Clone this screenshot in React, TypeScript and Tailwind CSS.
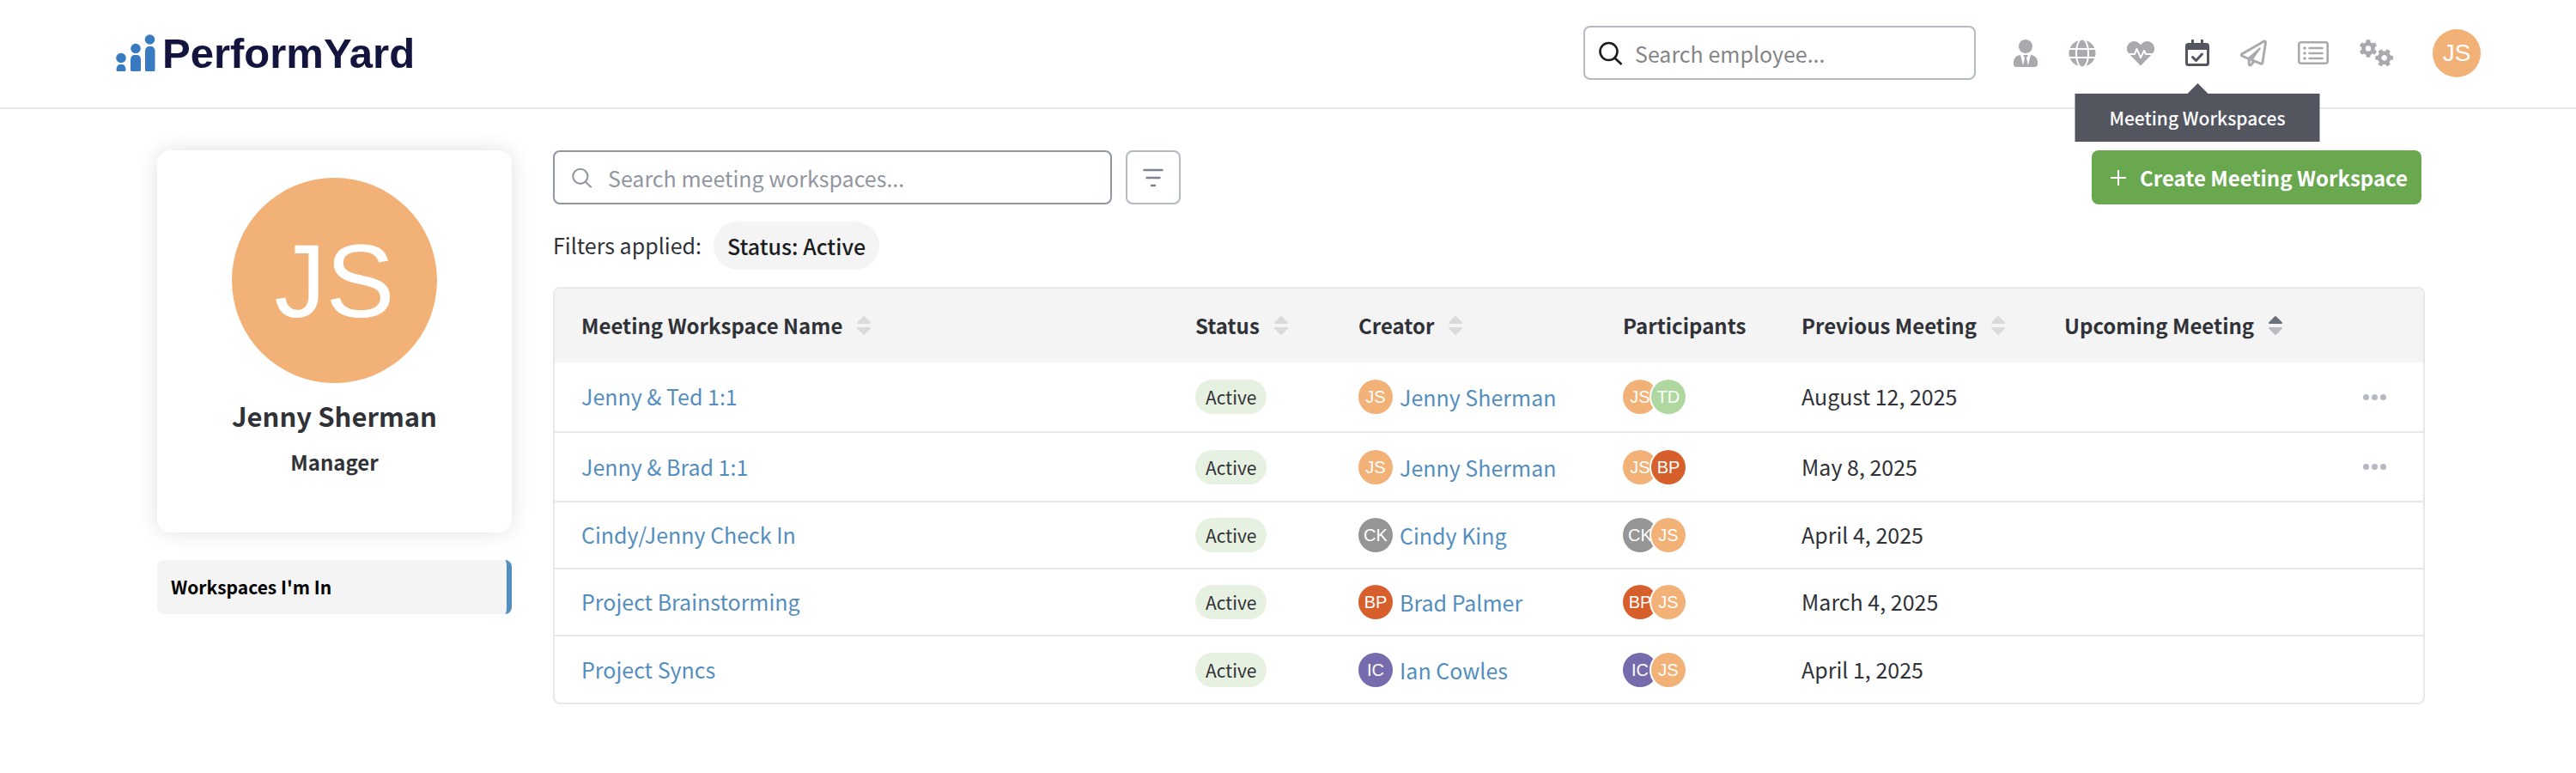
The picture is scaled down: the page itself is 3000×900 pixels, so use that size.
import clsx from "clsx";
import { FaGlobe, FaHeartbeat, FaRegPaperPlane, FaUserTie } from "react-icons/fa";

type Person = {
    name: string;
    initials: string;
    color: string;
};

type Workspace = {
    name: string;
    creator: Person;
    participants: Person[];
    previous: string;
    hasMenu: boolean;
};

const jenny: Person = { name: "Jenny Sherman", initials: "JS", color: "bg-[#f2b177]" };
const ted: Person = { name: "Ted", initials: "TD", color: "bg-[#aed8a0]" };
const brad: Person = { name: "Brad Palmer", initials: "BP", color: "bg-[#d65f2b]" };
const cindy: Person = { name: "Cindy King", initials: "CK", color: "bg-[#969696]" };
const ian: Person = { name: "Ian Cowles", initials: "IC", color: "bg-[#766bac]" };

const workspaces: Workspace[] = [
    { name: "Jenny & Ted 1:1", creator: jenny, participants: [jenny, ted], previous: "August 12, 2025", hasMenu: true },
    { name: "Jenny & Brad 1:1", creator: jenny, participants: [jenny, brad], previous: "May 8, 2025", hasMenu: true },
    { name: "Cindy/Jenny Check In", creator: cindy, participants: [cindy, jenny], previous: "April 4, 2025", hasMenu: false },
    { name: "Project Brainstorming", creator: brad, participants: [brad, jenny], previous: "March 4, 2025", hasMenu: false },
    { name: "Project Syncs", creator: ian, participants: [ian, jenny], previous: "April 1, 2025", hasMenu: false },
];

const SearchIcon = ({ className, strokeWidth }: { className: string; strokeWidth: number }) => (
    <svg viewBox="0 0 28 28" fill="none" stroke="currentColor" strokeWidth={strokeWidth} className={className}>
        <circle cx="11.5" cy="12" r="10" />
        <path d="M18.5 19.5L26.5 27" />
    </svg>
);

const CalendarIcon = () => (
    <svg viewBox="0 0 28 31" fill="currentColor" className="w-7 h-[31px]">
        <path
            fillRule="evenodd"
            d="M7 1a1 1 0 0 1 3 0v3h8V1a1 1 0 0 1 3 0v3h3.5a3.5 3.5 0 0 1 3.5 3.5v20a3.5 3.5 0 0 1-3.5 3.5h-21a3.5 3.5 0 0 1-3.5-3.5v-20a3.5 3.5 0 0 1 3.5-3.5H7zM3 12v15a1 1 0 0 0 1 1h20a1 1 0 0 0 1-1V12z"
        />
        <path d="M8.5 20.5l4 4 7-7.5" fill="none" stroke="currentColor" strokeWidth="3" strokeLinecap="round" strokeLinejoin="round" />
    </svg>
);

const ListIcon = () => (
    <svg viewBox="0 0 36 27" fill="none" stroke="currentColor" strokeWidth="2.6" className="w-9 h-[27px]">
        <rect x="1.3" y="1.3" width="33.4" height="24.4" rx="2.5" />
        <path d="M13.500 8h15M13.500 14h15M13.500 20h15" strokeWidth="2.6" strokeLinecap="round" />
        <path d="M8 8h.01M8 14h.01M8 20h.01" strokeWidth="3.6" strokeLinecap="round" />
    </svg>
);

const toothAngles = [0, 60, 120, 180, 240, 300];

const Gear = ({ x, y, rotation }: { x: number; y: number; rotation: number }) => (
    <g transform={`translate(${x} ${y}) rotate(${rotation})`}>
        <circle r="5.5" strokeWidth="4.6" />
        {toothAngles.map((angle) => (
            <path key={angle} d="M-1.4 -6.500V-9.200H1.4V-6.500z" transform={`rotate(${angle})`} strokeWidth="2.2" fill="currentColor" />
        ))}
    </g>
);

const GearsIcon = () => (
    <svg viewBox="0 0 39 31" fill="none" stroke="currentColor" strokeLinejoin="round" className="w-[39px] h-[31px]">
        <Gear x={10} y={10.5} rotation={0} />
        <Gear x={28.7} y={21.3} rotation={30} />
    </svg>
);

const navItems = [
    { label: "Profile", icon: <FaUserTie className="w-7 h-8" />, active: false },
    { label: "Company", icon: <FaGlobe className="size-8" />, active: false },
    { label: "Engagement", icon: <FaHeartbeat className="size-8" />, active: false },
    { label: "Meeting Workspaces", icon: <CalendarIcon />, active: true },
    { label: "Feedback", icon: <FaRegPaperPlane className="w-[31px] h-8" />, active: false },
    { label: "Reports", icon: <ListIcon />, active: false },
    { label: "Settings", icon: <GearsIcon />, active: false },
];

const Logo = () => (
    <a href="#home" className="flex items-center gap-2 text-[#14153f]">
        <svg viewBox="0 0 46 44" fill="#387bc1" className="w-[46px] h-11">
            <circle cx="6" cy="27.5" r="5.8" />
            <path d="M.5 41.5C.5 37 3 35 4.5 35h3c1.5 0 4 2 4 6.5 0 .9-.6 1.500-1.500 1.500H2C1.100 43 .5 42.400 .5 41.500z" />
            <circle cx="23" cy="16.5" r="5.8" />
            <path d="M17 30c0-4.5 2.5-6 4.5-6h3c2 0 4.5 1.5 4.5 6v11.5c0 .9-.6 1.5-1.5 1.5h-9c-.9 0-1.5-.6-1.5-1.5z" />
            <circle cx="39.5" cy="6" r="5.8" />
            <path d="M34 19.5c0-3.5 2.5-5.5 4.5-5.5h2.5c2 0 4.5 2 4.5 5.5v22c0 .9-.6 1.5-1.5 1.5h-8.500c-.9 0-1.500-.6-1.500-1.500z" />
        </svg>
        <span className="font-['Liberation_Sans',sans-serif] text-[49px] leading-[52px] font-bold">PerformYard</span>
    </a>
);

const Avatar = ({ person, className }: { person: Person; className?: string }) => (
    <span
        className={clsx(
            "flex shrink-0 items-center justify-center rounded-full text-white font-['Liberation_Sans',sans-serif]",
            person.color,
            className,
        )}
    >
        {person.initials}
    </span>
);

const SortButton = ({ label, active = false }: { label: string; active?: boolean }) => (
    <button type="button" className="flex items-center gap-4 font-bold">
        {label}
        <svg viewBox="0 0 18 24" strokeLinejoin="round" strokeWidth="2" className="w-[18px] h-6">
            <path d="M9 2L16 9H2z" className={active ? "fill-[#6b717c] stroke-[#6b717c]" : "fill-[#d9dadc] stroke-[#d9dadc]"} />
            <path d="M9 22L16 15H2z" className={active ? "fill-[#b9bcc1] stroke-[#b9bcc1]" : "fill-[#d9dadc] stroke-[#d9dadc]"} />
        </svg>
    </button>
);

const Header = () => (
    <header className="flex items-center justify-between border-b-2 border-[#e8e8e8] h-[127px] pb-0.5 pl-[135px] pr-[111px]">
        <Logo />
        <div className="flex items-center">
            <label className="flex items-center gap-3.5 w-[457px] h-[63px] mr-11 px-4 rounded-lg border-2 border-[#b5b9c1]">
                <SearchIcon className="size-7 shrink-0 text-[#1b1c20]" strokeWidth={2.6} />
                <input
                    type="search"
                    aria-label="Search employee"
                    placeholder="Search employee..."
                    className="w-full text-[25px] leading-9 outline-none placeholder:text-[#858585]"
                />
            </label>
            <nav className="flex items-center gap-9 text-[#a9aaae]">
                {navItems.map((item) => (
                    <div key={item.label} className="relative flex">
                        <a href="#nav" aria-label={item.label} className={clsx(item.active && "text-[#53565f]")}>
                            {item.icon}
                        </a>
                        {item.active && (
                            <div role="tooltip" className="absolute top-[51px] left-1/2 z-10 -translate-x-1/2 flex flex-col items-center">
                                <svg viewBox="0 0 24 12" className="w-6 h-3 fill-[#53565f]">
                                    <path d="M12 0L24 12H0z" />
                                </svg>
                                <span className="bg-[#53565f] px-10 py-2 text-[21px] leading-10 font-medium text-white whitespace-nowrap">
                                    Meeting Workspaces
                                </span>
                            </div>
                        )}
                    </div>
                ))}
            </nav>
            <button type="button" aria-label="Account" className="ml-[46px]">
                <Avatar person={jenny} className="size-14 text-[28px]" />
            </button>
        </div>
    </header>
);

const Sidebar = () => (
    <aside className="w-[413px] shrink-0">
        <section className="flex flex-col items-center rounded-2xl pt-8 pb-[60px] shadow-[0_0_24px_rgba(0,0,0,0.12)]">
            <Avatar person={jenny} className="size-[239px] text-[120px]" />
            <h1 className="mt-2.5 text-[31px] leading-[56px] font-bold">Jenny Sherman</h1>
            <p className="mt-1 text-[24px] leading-[44px] font-bold">Manager</p>
        </section>
        <a href="#mine" className="mt-8 block rounded-lg border-r-6 border-[#548ebe] bg-[#f4f4f4] px-4 py-3 text-[21px] leading-[39px] font-bold text-black">
            Workspaces I'm In
        </a>
    </aside>
);

const WorkspaceTable = () => (
    <div className="mt-5 overflow-hidden rounded-lg border-2 border-[#e8e8e8]">
        <table className="w-full table-fixed text-left">
            <colgroup>
                <col />
                <col className="w-[190px]" />
                <col className="w-[308px]" />
                <col className="w-[208px]" />
                <col className="w-[306px]" />
                <col className="w-[329px]" />
                <col className="w-[120px]" />
            </colgroup>
            <thead className="bg-[#f4f4f4] text-[24px] leading-9">
                <tr className="h-[86px]">
                    <th className="pl-[31px]"><SortButton label="Meeting Workspace Name" /></th>
                    <th className="pl-[31px]"><SortButton label="Status" /></th>
                    <th className="pl-[31px]"><SortButton label="Creator" /></th>
                    <th className="pl-[31px] font-bold">Participants</th>
                    <th className="pl-[31px]"><SortButton label="Previous Meeting" /></th>
                    <th className="pl-[31px]"><SortButton label="Upcoming Meeting" active /></th>
                    <th aria-label="Actions" />
                </tr>
            </thead>
            <tbody className="divide-y-2 divide-[#e8e8e8] text-[25px] leading-9">
                {workspaces.map((workspace) => (
                    <tr key={workspace.name} className={workspace.hasMenu ? "h-[81px]" : "h-[78px]"}>
                        <td className="pl-[31px] pb-0.5">
                            <a href="#workspace" className="text-[#548ebe]">{workspace.name}</a>
                        </td>
                        <td className="pl-[31px]">
                            <span className="block w-fit rounded-full bg-[#e7f1e1] px-3 text-[21px] leading-10">Active</span>
                        </td>
                        <td className="pl-[31px]">
                            <a href="#creator" className="flex items-center gap-2 text-[#548ebe]">
                                <Avatar person={workspace.creator} className="size-10 text-[20px]" />
                                {workspace.creator.name}
                            </a>
                        </td>
                        <td className="pl-[31px]">
                            <div className="flex items-center">
                                {workspace.participants.map((person, i) => (
                                    <Avatar
                                        key={person.initials}
                                        person={person}
                                        className={clsx("size-10 text-[20px]", i > 0 && "-ml-[7px] ring-2 ring-white")}
                                    />
                                ))}
                            </div>
                        </td>
                        <td className="pl-[31px] pb-0.5">{workspace.previous}</td>
                        <td />
                        <td className="pr-[43px]">
                            {workspace.hasMenu && (
                                <button type="button" aria-label="More actions" className="ml-auto flex gap-[3px]">
                                    <span className="size-[7px] rounded-full bg-[#b5b9c1]" />
                                    <span className="size-[7px] rounded-full bg-[#b5b9c1]" />
                                    <span className="size-[7px] rounded-full bg-[#b5b9c1]" />
                                </button>
                            )}
                        </td>
                    </tr>
                ))}
            </tbody>
        </table>
    </div>
);

const App = () => {
    return (
        <div className="min-h-screen bg-white text-[#303238] font-['Noto_Sans_CJK_JP',sans-serif]">
            <Header />
            <div className="flex gap-12 pt-12 pb-20 pl-[183px] pr-[176px]">
                <Sidebar />
                <main className="min-w-0 flex-1">
                    <div className="flex items-center pr-1">
                        <label className="flex items-center gap-[18px] w-[651px] h-[63px] px-5 rounded-lg border-2 border-[#9196a3]">
                            <SearchIcon className="size-6 shrink-0 text-[#9196a1]" strokeWidth={2.4} />
                            <input
                                type="search"
                                aria-label="Search meeting workspaces"
                                placeholder="Search meeting workspaces..."
                                className="w-full text-[25px] leading-9 outline-none placeholder:text-[#9196a1]"
                            />
                        </label>
                        <button
                            type="button"
                            aria-label="Filter"
                            className="ml-4 flex h-[63px] w-16 items-center justify-center rounded-lg border-2 border-[#b5b9c1] text-[#7c828e]"
                        >
                            <svg viewBox="0 0 24 22" fill="none" stroke="currentColor" strokeWidth="2.5" strokeLinecap="round" className="w-6 h-[22px]">
                                <path d="M1.5 2h21M4.5 11h15M10 20h4" />
                            </svg>
                        </button>
                        <button
                            type="button"
                            className="ml-auto flex h-[63px] items-center gap-4 rounded-lg bg-[#69a84f] pl-[22px] pr-4 text-[24px] leading-9 font-bold text-white"
                        >
                            <svg viewBox="0 0 18 18" stroke="currentColor" strokeWidth="2" className="size-[18px]">
                                <path d="M9 0v18M0 9h18" />
                            </svg>
                            Create Meeting Workspace
                        </button>
                    </div>
                    <div className="mt-5 flex items-center gap-3.5 text-[25px]">
                        <span>Filters applied:</span>
                        <span className="rounded-full bg-[#f4f4f4] px-4 leading-[56px] font-medium text-[#1b1c20]">Status: Active</span>
                    </div>
                    <WorkspaceTable />
                </main>
            </div>
        </div>
    );
};

export default App;
